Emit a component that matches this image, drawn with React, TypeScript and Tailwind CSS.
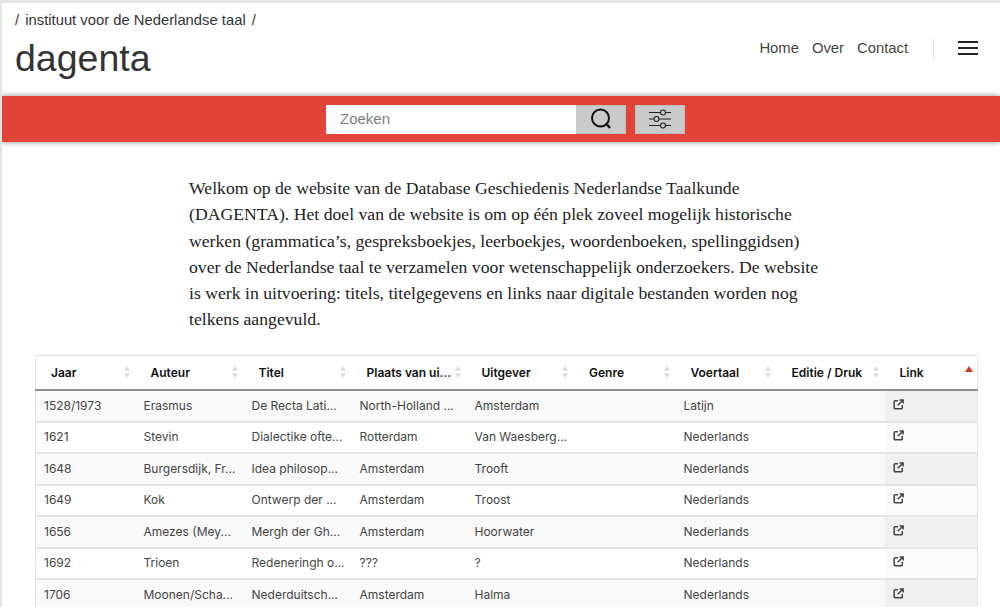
const columns = [
  { label: 'Jaar', width: 100 },
  { label: 'Auteur', width: 108 },
  { label: 'Titel', width: 108 },
  { label: 'Plaats van ui...', width: 115 },
  { label: 'Uitgever', width: 107.5 },
  { label: 'Genre', width: 101.5 },
  { label: 'Voertaal', width: 101 },
  { label: 'Editie / Druk', width: 108 },
  { label: 'Link', width: 93 },
];

const rows = [
  ['1528/1973', 'Erasmus', 'De Recta Lati...', 'North-Holland ...', 'Amsterdam', '', 'Latijn'],
  ['1621', 'Stevin', 'Dialectike ofte...', 'Rotterdam', 'Van Waesberg...', '', 'Nederlands'],
  ['1648', 'Burgersdijk, Fr...', 'Idea philosop...', 'Amsterdam', 'Trooft', '', 'Nederlands'],
  ['1649', 'Kok', 'Ontwerp der ...', 'Amsterdam', 'Troost', '', 'Nederlands'],
  ['1656', 'Amezes (Mey...', 'Mergh der Gh...', 'Amsterdam', 'Hoorwater', '', 'Nederlands'],
  ['1692', 'Trioen', 'Redeneringh o...', '???', '?', '', 'Nederlands'],
  ['1706', 'Moonen/Scha...', 'Nederduitsch...', 'Amsterdam', 'Halma', '', 'Nederlands'],
];

function SortArrows({ active }: { active?: boolean }) {
  if (active) {
    return (
      <svg viewBox="0 0 8 6" className="absolute right-[4px] top-[10px] w-[8px] h-[6px]">
        <path d="M4 0 L8 6 L0 6 Z" fill="#d9362b" />
      </svg>
    );
  }
  return (
    <svg viewBox="0 0 8 12" className="absolute right-[5px] top-[10px] w-[8px] h-[12px]">
      <path d="M4 0 L7 4.8 L1 4.8 Z M4 12 L7 7.2 L1 7.2 Z" fill="#d9dbdd" />
    </svg>
  );
}

function LinkIcon() {
  return (
    <svg viewBox="0 0 24 24" className="h-[13px] w-[13px]" fill="none" stroke="#444" strokeWidth="2.8">
      <path d="M11 5H6a2 2 0 0 0-2 2v11a2 2 0 0 0 2 2h11a2 2 0 0 0 2-2v-5" />
      <path d="M10.5 13.5 L20 4 M14 3.5h6.5V10" />
    </svg>
  );
}

export default function App() {
  return (
    <div className="h-[607px] w-[1000px] overflow-hidden bg-white border-t-[3px] border-l-2 border-[#e4e4e4] font-['Liberation_Sans',sans-serif]">
      {/* Header */}
      <header className="flex h-[93px] justify-between pl-[13px] pr-[22px]">
        <div>
          <p className="mt-[8px] text-[14.8px] leading-[18px] text-[#333]">
            /<span className="mx-[2px]"> instituut voor de Nederlandse taal </span>/
          </p>
          <h1 className="mt-[7px] text-[37.5px] leading-[44px] text-[#333]">dagenta</h1>
        </div>
        <nav className="mt-[33px] flex h-[24px] items-center text-[14.8px] text-[#444]">
          <a className="mr-[13px]">Home</a>
          <a className="mr-[13px]">Over</a>
          <a>Contact</a>
          <span className="ml-[25px] mr-[24px] h-[23px] border-l border-[#e5e5e5]" />
          <span className="flex w-[20px] flex-col gap-[4px]">
            <span className="h-[2px] bg-[#222]" />
            <span className="h-[2px] bg-[#222]" />
            <span className="h-[2px] bg-[#222]" />
          </span>
        </nav>
      </header>

      {/* Search bar */}
      <div className="-ml-[1px] flex h-[46px] items-center justify-center gap-[9px] bg-[#e24337] pl-[10px] shadow-[0_0_6px_rgba(0,0,0,0.45)]">
        <div className="flex h-[29px] w-[300px]">
          <input
            placeholder="Zoeken"
            className="w-[250px] bg-white pl-[14px] text-[15px] text-[#777] outline-none placeholder:text-[#808080]"
          />
          <button className="flex w-[50px] items-center justify-center border border-[#bdbdbd] border-l-0 bg-[#cacaca]">
            <svg viewBox="0 0 24 24" className="h-[24px] w-[24px]" fill="none" stroke="#111" strokeWidth="2">
              <circle cx="11.5" cy="11" r="8.5" />
              <path d="M17.5 17 L21 21" strokeWidth="2.4" />
            </svg>
          </button>
        </div>
        <button className="flex h-[29px] w-[50px] items-center justify-center border border-[#bdbdbd] bg-[#cacaca]">
          <svg viewBox="0 0 24 24" className="h-[24px] w-[24px]" fill="none" stroke="#222" strokeWidth="1.1">
            <path d="M1 5.5 H12.5 M17.5 5.5 H23 M1 12 H6 M11 12 H23 M1 18.5 H12.5 M17.5 18.5 H23" />
            <circle cx="15" cy="5.5" r="2.5" />
            <circle cx="8.5" cy="12" r="2.5" />
            <circle cx="15" cy="18.5" r="2.5" />
          </svg>
        </button>
      </div>

      {/* Intro */}
      <p className="ml-[187px] mt-[33px] w-[640px] font-['Liberation_Serif',serif] text-[17.7px] leading-[26.3px] text-[#222]">
        Welkom op de website van de Database Geschiedenis Nederlandse Taalkunde (DAGENTA). Het doel van de website is om
        op één plek zoveel mogelijk historische werken (grammatica’s, gespreksboekjes, leerboekjes, woordenboeken,
        spellinggidsen) over de Nederlandse taal te verzamelen voor wetenschappelijk onderzoekers. De website is werk in
        uitvoering: titels, titelgegevens en links naar digitale bestanden worden nog telkens aangevuld.
      </p>

      {/* Table */}
      <table className="ml-[33px] mt-[22px] w-[942px] table-fixed border-collapse border border-[#e6e6e6] font-['Inter',sans-serif] text-[12px]">
        <colgroup>
          {columns.map((c) => (
            <col key={c.label} style={{ width: c.width }} />
          ))}
        </colgroup>
        <thead>
          <tr className="h-[35px] border-b-2 border-[#8c8c8c]">
            {columns.map((c, i) => (
              <th key={c.label} className="relative pl-[15px] text-left font-semibold text-[#111]">
                {c.label}
                <SortArrows active={i === columns.length - 1} />
              </th>
            ))}
          </tr>
        </thead>
        <tbody>
          {rows.map((row, r) => (
            <tr key={row[0]} className={`h-[31.5px] border-b-2 border-[#e4e4e4] ${r % 2 === 0 ? 'bg-[#f9f9f9]' : 'bg-white'}`}>
              {row.map((cell, i) => (
                <td key={i} className="overflow-hidden whitespace-nowrap pb-[1px] pl-[8px] text-[#444]">
                  {cell}
                </td>
              ))}
              <td />
              <td className={`pb-[4px] pl-[7px] ${r % 2 === 0 ? 'bg-[#f0f0f0]' : 'bg-[#fafafa]'}`}>
                <LinkIcon />
              </td>
            </tr>
          ))}
        </tbody>
      </table>
    </div>
  );
}
